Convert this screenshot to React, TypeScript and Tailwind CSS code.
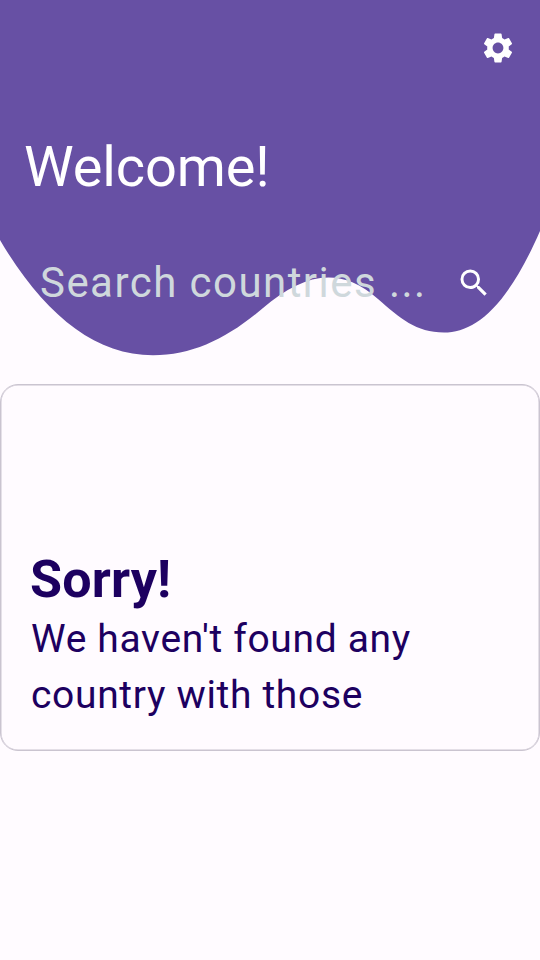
import { MdSearch, MdSettings } from "react-icons/md";

function Header() {
  return (
    <header className="relative h-[356px] w-full text-white">
      <svg className="absolute inset-0 h-full w-full" viewBox="0 0 540 356" aria-hidden="true">
        <path
          d="M0 0H540V231C506 309 474 332.5 444 332.5C416 332.5 400 318 378 299C338 264 302 275.500 263 308C228 338 193 355.300 153 355.300C94 355.300 43 313 0 240Z"
          fill="#6750a4"
        />
      </svg>
      <div className="relative flex h-full flex-col">
        <div className="flex justify-end pt-[30px] pr-6">
          <button aria-label="Settings">
            <MdSettings size={36} />
          </button>
        </div>
        <h1 className="mt-[65px] ml-6 text-[56px] leading-[72px] tracking-[-0.12px] whitespace-nowrap">Welcome!</h1>
        <div className="mt-12 flex h-[64px] items-center justify-between pr-12 pl-10">
          <span className="text-[42px] leading-[64px] tracking-[1.45px] whitespace-nowrap text-[#cfd8dc]">
            Search countries ...
          </span>
          <MdSearch size={36} />
        </div>
      </div>
    </header>
  );
}

function EmptyResult() {
  return (
    <section className="mt-7 flex h-[366.5px] flex-col justify-end rounded-[18px] border border-[#cac4d0] pb-[26.5px] pl-[30px] text-[#1d0060] shadow-[inset_0_0_0_0.5px_#cac4d0]">
      <h2 className="mb-px -ml-px text-[52px] leading-[60px] font-bold tracking-[0.2px]">Sorry!</h2>
      <p className="text-[39px] leading-[56px] tracking-[0.66px] whitespace-nowrap">
        We haven't found any
        <br />
        country with those
      </p>
    </section>
  );
}

export default function App() {
  return (
    <main className="h-[960px] w-[540px] overflow-hidden bg-[#fffbff] font-['Roboto',sans-serif]">
      <Header />
      <EmptyResult />
    </main>
  );
}
